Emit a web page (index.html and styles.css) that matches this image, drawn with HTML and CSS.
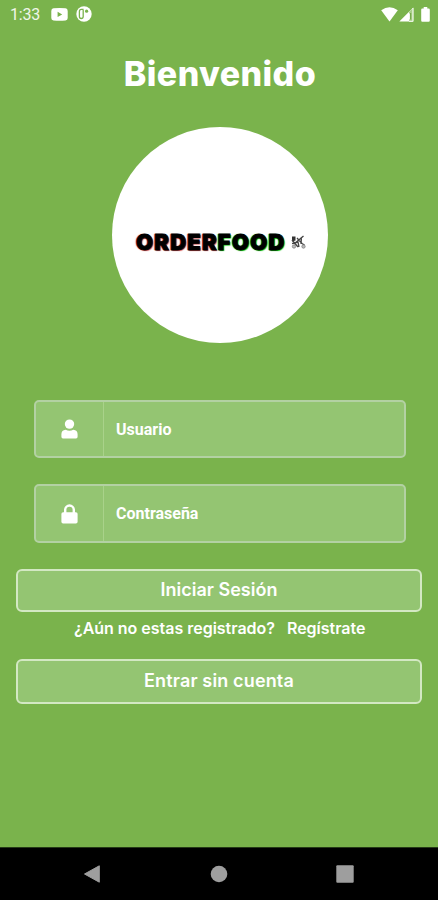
FILE: index.html
```html
<!DOCTYPE html>
<html lang="es">
<head>
<meta charset="utf-8">
<meta name="viewport" content="width=device-width, initial-scale=1">
<title>OrderFood</title>
<link rel="stylesheet" href="styles.css">
</head>
<body>
<div class="screen">
  <header class="status">
    <span class="time">1:33</span>
    <svg class="yt" width="17" height="13" viewBox="0 0 17 13"><path fill="#fff" fill-rule="evenodd" d="M2.5 0.3Q8.500 -.2 14.500 .3Q16.700 .5 16.700 3V10Q16.700 12.300 14.500 12.500Q8.500 13 2.500 12.500Q.3 12.300 .3 10V3Q.3 .5 2.500 .3ZM6.600 3.700V9.100L11.200 6.400Z"/></svg>
    <svg class="app" width="16" height="16" viewBox="0 0 16 16"><circle cx="8" cy="8" r="7.700" fill="#fff"/><path d="M7.600 3.400H5.400Q3.400 3.400 3.400 5.400V10.500Q3.400 12.500 5.300 12.500Q7.200 12.500 7.200 10.500V4" fill="none" stroke="#7ab34c" stroke-width="1.300"/><circle cx="10.600" cy="5.200" r="1.600" fill="#7ab34c"/></svg>
    <svg class="wifi" width="17" height="15" viewBox="0 0 17 15"><path fill="#fff" d="M.2 3.300Q8.500-2.700 16.800 3.300L8.500 14.500Z"/></svg>
    <svg class="signal" width="15" height="15" viewBox="0 0 15 15"><path fill="#fff" d="M.3 14.600L14.300.6V14.600Z"/><path fill="#a8cf88" d="M10 5L14.300.7V14.500H10Z"/><path d="M10.600 6.500V12.500M13.900 1V14.300H10" fill="none" stroke="#fff" stroke-width=".9"/><path d="M11.700 6V12.500" stroke="#6ca13f"/></svg>
    <svg class="battery" width="9" height="15" viewBox="0 0 9 15"><path fill="#fff" d="M2.700 0H6.300V1.500H7.700Q8.800 1.500 8.800 2.700V13.500Q8.800 14.700 7.700 14.700H1.300Q.2 14.700 .2 13.500V2.700Q.2 1.500 1.300 1.500H2.700Z"/></svg>
  </header>

  <main class="content">
    <h1 class="title">Bienvenido</h1>
    <div class="logo">
      <span class="order">ORDER</span><span class="food">FOOD</span>
      <svg class="bike" width="17" height="16" viewBox="0 0 17 16"><path d="M2 2.500H5.500V6.500L2 7.500Z" fill="#333"/><path d="M4 10L13.500 2M7 4L12 9.500L14.500 11M2 9.500L8 8L9 13M11.500 3L11 10M2 6L8 13" stroke="#444" stroke-width="1.300" fill="none"/><circle cx="4" cy="12.500" r="1.700" fill="#bbb" stroke="#777" stroke-width=".7"/><circle cx="13.500" cy="12.500" r="1.700" fill="#bbb" stroke="#777" stroke-width=".7"/></svg>
    </div>

    <form class="form">
      <div class="field">
        <span class="field-icon"><svg width="17" height="20" viewBox="0 0 17 20"><circle cx="8.500" cy="5.100" r="4.700" fill="#fff"/><path fill="#fff" d="M4.700 10.700Q8.500 12.800 12.300 10.700Q16.600 11 16.600 15.300V17.700Q16.600 19.400 15 19.400H2Q.4 19.400 .4 17.700V15.300Q.4 11 4.700 10.700Z"/></svg></span>
        <span class="label user">Usuario</span>
      </div>
      <div class="field tall">
        <span class="field-icon"><svg width="17" height="20" viewBox="0 0 17 20"><path d="M4.200 9V5.800A4.300 4.300 0 0 1 12.800 5.800V9" fill="none" stroke="#fff" stroke-width="2.400"/><rect x=".4" y="8.300" width="16.200" height="11.200" rx="1.700" fill="#fff"/></svg></span>
        <span class="label pass">Contraseña</span>
      </div>
    </form>

    <div class="button"><span class="login">Iniciar Sesión</span></div>
    <p class="register"><span class="ask">¿Aún no estas registrado?</span><span class="link">Regístrate</span></p>
    <div class="button last"><span class="guest">Entrar sin cuenta</span></div>
  </main>

  <nav class="nav">
    <svg width="18" height="20" viewBox="0 0 18 20"><path d="M1.500 10L16.300 1.800V18.200Z" fill="#9e9e9e" stroke="#9e9e9e" stroke-linejoin="round"/></svg>
    <svg width="18" height="20" viewBox="0 0 18 20"><circle cx="9" cy="10" r="8.300" fill="#9e9e9e"/></svg>
    <svg width="18" height="20" viewBox="0 0 18 20"><rect x=".3" y="1.300" width="17.400" height="17.400" rx="1" fill="#9e9e9e"/></svg>
  </nav>
</div>
</body>
</html>
```
FILE: styles.css
```css
* { box-sizing: border-box; }
body { margin: 0; color: #fff; font-family: Inter, "Open Sans", sans-serif; }
svg { display: block; flex: none; }
.screen { width: 438px; height: 900px; display: flex; flex-direction: column; overflow: hidden; background: #7ab34c; }
.status { height: 28px; flex: none; display: flex; align-items: center; padding-left: 10px; }
.time { width: 41px; font: 400 16px/20px Roboto, sans-serif; padding-top: 1px; color: #f0f6e9; letter-spacing: -0.2px; }
.app { margin-left: 8px; }
.wifi { margin-left: auto; }
.signal { margin-left: 1px; }
.battery { margin: 0 8px 0 7px; }
.content { flex: 1; padding: 0 16px; }
.title { margin: 20px 0 0; padding-left: 2px; text-align: center; white-space: nowrap; font-size: 34px; line-height: 51px; font-weight: 800; letter-spacing: 0.4px; }
.logo { width: 216px; height: 216px; margin: 28px 0 0 96px; border-radius: 50%; background: #fff; display: flex; align-items: center; padding: 14px 0 0 24px; color: #000; font: 900 22px/26px Inter, sans-serif; letter-spacing: 1.2px; white-space: nowrap; }
.order, .food { -webkit-text-stroke: 0.8px #000; }
.order { text-shadow: -1px 0 1px #c44, 1px 1px 1px #c44; }
.food { text-shadow: -1px 0 1px #0b0, 1px 1px 1px #0b0; }
.bike { margin-left: 4px; }
.form { margin: 57px 16px 0 18px; }
.field { height: 58px; margin-bottom: 26px; display: flex; border: 2px solid #b3d1a3; border-radius: 5px; background: #94c572; }
.field.tall { height: 59px; }
.field-icon { width: 68px; flex: none; display: flex; align-items: center; justify-content: center; border-right: 1px solid #a9d28a; }
.label { align-self: center; padding: 1px 0 0 12px; font: 700 16px/22px Roboto, sans-serif; }
.button { height: 43px; padding-bottom: 1px; display: flex; align-items: center; justify-content: center; border: 2px solid #d3e8c3; border-radius: 6px; background: #94c572; font-size: 18px; line-height: 24px; font-weight: 600; white-space: nowrap; }
.button.last { height: 45px; padding-bottom: 2px; }
.login { letter-spacing: 0; }
.guest { letter-spacing: 0.15px; }
.register { margin: 5px 0 19px; padding-left: 58px; display: flex; gap: 12px; font-size: 16px; line-height: 23px; font-weight: 600; letter-spacing: -0.02px; white-space: nowrap; }
.nav { height: 53px; flex: none; display: flex; align-items: center; justify-content: space-between; padding: 0 84px 0 83px; background: #000; border-top: 1px solid #263a17; }
```
